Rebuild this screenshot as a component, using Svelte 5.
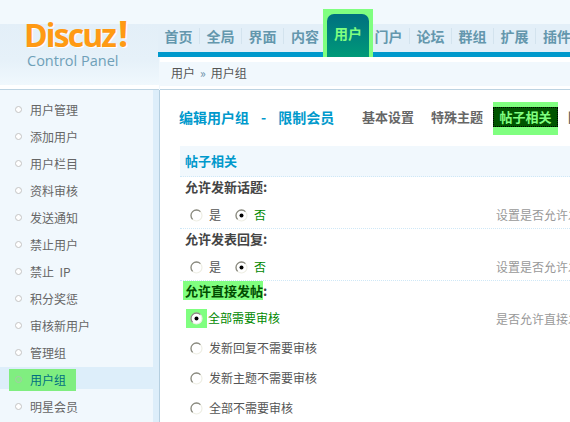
<script lang="ts">
  const navItems = ['首页', '全局', '界面', '内容', '用户', '门户', '论坛', '群组', '扩展', '插件'];

  const menuItems = [
    '用户管理', '添加用户', '用户栏目', '资料审核', '发送通知', '禁止用户',
    '禁止  IP', '积分奖惩', '审核新用户', '管理组', '用户组', '明星会员'
  ];

  const tabs = ['基本设置', '特殊主题', '帖子相关', '附件'];
</script>

{#snippet radio(checked: boolean)}
  <svg class="radio" width="13" height="13" viewBox="0 0 13 13" aria-hidden="true">
    <circle cx="6.5" cy="6.5" r="5.5" fill="#fff" stroke="#eeeee4" stroke-width="1.2" />
    <path d="M2.6 10.4A5.5 5.5 0 0 1 10.4 2.6" fill="none" stroke="#8a8a80" stroke-width="1.3" />
    {#if checked}<circle cx="6.5" cy="6.5" r="2" fill="#000" />{/if}
  </svg>
{/snippet}

<div class="page">
  <header class="top">
    <div class="logo">
      <div class="brand">Discuz<span>!</span></div>
      <div class="sub">Control Panel</div>
    </div>
    <div class="top-right">
      <nav class="nav">
        {#each navItems as item}
          {#if item === '用户'}
            <div class="nav-on"><a href="#top">{item}</a></div>
          {:else}
            <a class="nav-item" href="#top">{item}</a>
          {/if}
        {/each}
      </nav>
      <div class="crumb">用户<i>»</i>用户组</div>
    </div>
  </header>

  <div class="body">
    <aside class="side">
      <ul>
        {#each menuItems as item}
          <li class:on={item === '用户组'}>
            <span class="entry"><b class="dot"></b>{item}</span>
          </li>
        {/each}
      </ul>
    </aside>

    <main class="main">
      <div class="title-row">
        <h1>编辑用户组<span>- 限制会员</span></h1>
        <div class="tabs">
          {#each tabs as tab}
            {#if tab === '帖子相关'}
              <div class="tab-on"><span>{tab}</span></div>
            {:else}
              <span class="tab">{tab}</span>
            {/if}
          {/each}
        </div>
      </div>

      <h2>帖子相关</h2>

      <section class="opt">
        <h3>允许发新话题:</h3>
        <div class="choice">
          <div class="pair">
            <label>{@render radio(false)}是</label>
            <label class="sel">{@render radio(true)}否</label>
          </div>
          <p class="hint">设置是否允许发新话题</p>
        </div>
      </section>

      <section class="opt">
        <h3>允许发表回复:</h3>
        <div class="choice">
          <div class="pair">
            <label>{@render radio(false)}是</label>
            <label class="sel">{@render radio(true)}否</label>
          </div>
          <p class="hint">设置是否允许发表回复</p>
        </div>
      </section>

      <section class="opt last">
        <h3><mark>允许直接发帖</mark>:</h3>
        <div class="choice stack">
          <div class="list">
            <label class="sel"><span class="mark-radio">{@render radio(true)}</span>全部需要审核</label>
            <label>{@render radio(false)}发新回复不需要审核</label>
            <label>{@render radio(false)}发新主题不需要审核</label>
            <label>{@render radio(false)}全部不需要审核</label>
          </div>
          <p class="hint">是否允许直接发帖</p>
        </div>
      </section>
    </main>
  </div>
</div>

<style>
  :global(body) {
    margin: 0;
    background: #fff;
    overflow: hidden;
  }

  .page {
    width: 570px;
    height: 422px;
    overflow: hidden;
    font: 12px/1 "Noto Sans CJK SC", "Liberation Sans", sans-serif;
    color: #555;
  }

  .top {
    display: flex;
    height: 90px;
    background: #f1f8fd;
  }

  .logo {
    box-sizing: border-box;
    width: 159px;
    height: 90px;
    padding: 18px 0 0 24px;
    border-bottom: 1px solid #bcd3e2;
    background: linear-gradient(#f2f9fd 0, #f2f9fd 24px, #e3eff8 24px, #e6f1f9 60px, #f0f8fd 85px, #fff 85px);
  }

  .brand {
    font: bold 32px/34px "Open Sans", "Liberation Sans", sans-serif;
    letter-spacing: -1.9px;
    color: #ff9a14;
    text-shadow: 1px 1px 0 #fff;
    white-space: nowrap;
  }

  .brand span {
    margin-left: 3px;
    font-size: 36px;
    line-height: 0;
  }

  .sub {
    margin: 0 0 0 3px;
    font: 14.5px/17px "Open Sans", "Liberation Sans", sans-serif;
    color: #6fa0b8;
  }

  .top-right {
    flex: 1;
    min-width: 0;
  }

  .nav {
    box-sizing: border-box;
    display: flex;
    height: 57px;
    margin-left: -1px;
    padding-top: 24px;
    border-bottom: 5px solid #0099cc;
    background: linear-gradient(#f2f9fd 0, #f2f9fd 24px, #e3eff8 24px);
  }

  .nav a {
    text-decoration: none;
  }

  .nav-item {
    flex: none;
    box-sizing: border-box;
    width: 42px;
    height: 16px;
    margin-top: 4px;
    border-right: 1px solid #d3e3ee;
    font-size: 14px;
    font-weight: 700;
    line-height: 16px;
    text-align: center;
    color: #6497ad;
    white-space: nowrap;
  }

  .nav-item:nth-child(4),
  .nav-item:nth-child(10) {
    border-right: none;
  }

  .nav-on {
    flex: none;
    box-sizing: border-box;
    width: 50px;
    height: 48px;
    margin: -15px -5px 0 -3px;
    padding: 5px 4px 0;
    background: #80ff80;
    position: relative;
  }

  .nav-on a {
    display: block;
    height: 43px;
    border-radius: 7px 7px 0 0;
    background: linear-gradient(#006f80, #009a78);
    color: #80ff80;
    font-size: 14px;
    font-weight: 700;
    line-height: 38px;
    text-align: center;
  }

  .crumb {
    box-sizing: border-box;
    height: 32px;
    margin-left: 1px;
    padding: 4px 0 0 11px;
    border-top: 5px solid #fff;
    border-bottom: 3px solid #fff;
    box-shadow: 0 1px 0 #bcd3e2;
    background: #f1f8fd;
    color: #555;
    line-height: 14px;
  }

  .crumb i {
    margin: 0 5px;
    font-style: normal;
    color: #6a8fa5;
  }

  .body {
    display: flex;
    height: 332px;
  }

  .side {
    box-sizing: border-box;
    flex: none;
    width: 160px;
    padding-top: 7px;
    border-right: 1px solid #b5cfe0;
    background: linear-gradient(90deg, #f1f8fd 153px, #ddeefa 153px);
  }

  .side ul {
    width: 153px;
    margin: 0;
    padding: 0;
    list-style: none;
  }

  .side li {
    height: 22px;
    margin-bottom: 5px;
    padding-left: 9px;
    line-height: 22px;
    color: #666;
    white-space: pre;
  }

  .side li.on {
    background: #ddeefa;
    color: #006f80;
  }

  .entry {
    display: inline-flex;
    align-items: center;
    padding-right: 1px;
    padding-left: 6px;
    height: 22px;
  }

  .on .entry {
    width: 67px;
    box-sizing: border-box;
    background: #80ee80;
  }

  .dot {
    box-sizing: border-box;
    width: 7px;
    height: 7px;
    margin-right: 8px;
    border: 1px solid #c4c4c4;
    border-radius: 50%;
    background: #fff;
  }

  .on .dot {
    border-color: #a8c8a8;
    background: transparent;
  }

  .main {
    flex: 1;
    min-width: 0;
    padding-left: 20px;
  }

  .title-row {
    display: flex;
    align-items: flex-start;
    height: 56px;
    white-space: nowrap;
  }

  h1 {
    flex: none;
    width: 183px;
    margin: 17px 0 0 -1px;
    font-size: 14px;
    line-height: 20px;
    font-weight: 700;
    color: #0099cc;
  }

  h1 span {
    margin-left: 12px;
    word-spacing: 9px;
  }

  .tabs {
    display: flex;
    align-items: flex-start;
    gap: 17px;
    height: 33px;
    margin-top: 12px;
  }

  .tab {
    margin-top: 5px;
    font-size: 13px;
    line-height: 20px;
    font-weight: 700;
    color: #666;
  }

  .tab-on {
    box-sizing: border-box;
    height: 33px;
    margin: 0 -7px;
    padding-top: 5px;
    background: #80ff80;
  }

  .tab-on span {
    display: block;
    box-sizing: border-box;
    width: 65px;
    height: 20px;
    border: 1px dotted #000;
    background: #005500;
    color: #80ff80;
    font-size: 13px;
    font-weight: 700;
    line-height: 18px;
    text-align: center;
  }

  h2 {
    box-sizing: border-box;
    height: 31px;
    margin: 0;
    padding-left: 5px;
    background: #f1f8fd;
    border-bottom: 1px dotted #cfe8f7;
    color: #0099cc;
    font-size: 13px;
    font-weight: 700;
    line-height: 29px;
  }

  .opt {
    box-sizing: border-box;
    height: 52px;
    border-bottom: 1px dotted #cfe8f7;
  }

  .opt.last {
    border-bottom: none;
  }

  h3 {
    height: 24px;
    margin: 0;
    padding: 3px 0 0 5px;
    box-sizing: border-box;
    font-size: 13px;
    font-weight: 700;
    line-height: 14px;
    color: #444;
  }

  mark {
    margin-left: -2px;
    padding-left: 2px;
    background: #80ff80;
    color: #004d00;
  }

  .choice {
    display: flex;
    justify-content: space-between;
    padding-left: 9px;
  }

  .pair {
    display: flex;
    gap: 13px;
    padding-top: 7px;
  }

  label {
    display: flex;
    align-items: center;
    gap: 6px;
    height: 14px;
    line-height: 14px;
    color: #555;
    white-space: nowrap;
  }

  label.sel {
    color: #008800;
  }

  .radio {
    flex: none;
    margin-left: 1px;
  }

  .hint {
    flex: none;
    width: 74px;
    height: 14px;
    margin: 7px 0 0;
    overflow: hidden;
    color: #999;
    line-height: 14px;
    white-space: nowrap;
  }

  .list {
    display: flex;
    flex-direction: column;
    gap: 16px;
    padding-top: 6px;
  }

  .mark-radio {
    display: flex;
    align-items: center;
    justify-content: center;
    width: 21px;
    height: 19px;
    margin: 0 -5px 0 -3px;
    background: #80ff80;
  }

  .mark-radio .radio {
    margin: 0;
  }
</style>
